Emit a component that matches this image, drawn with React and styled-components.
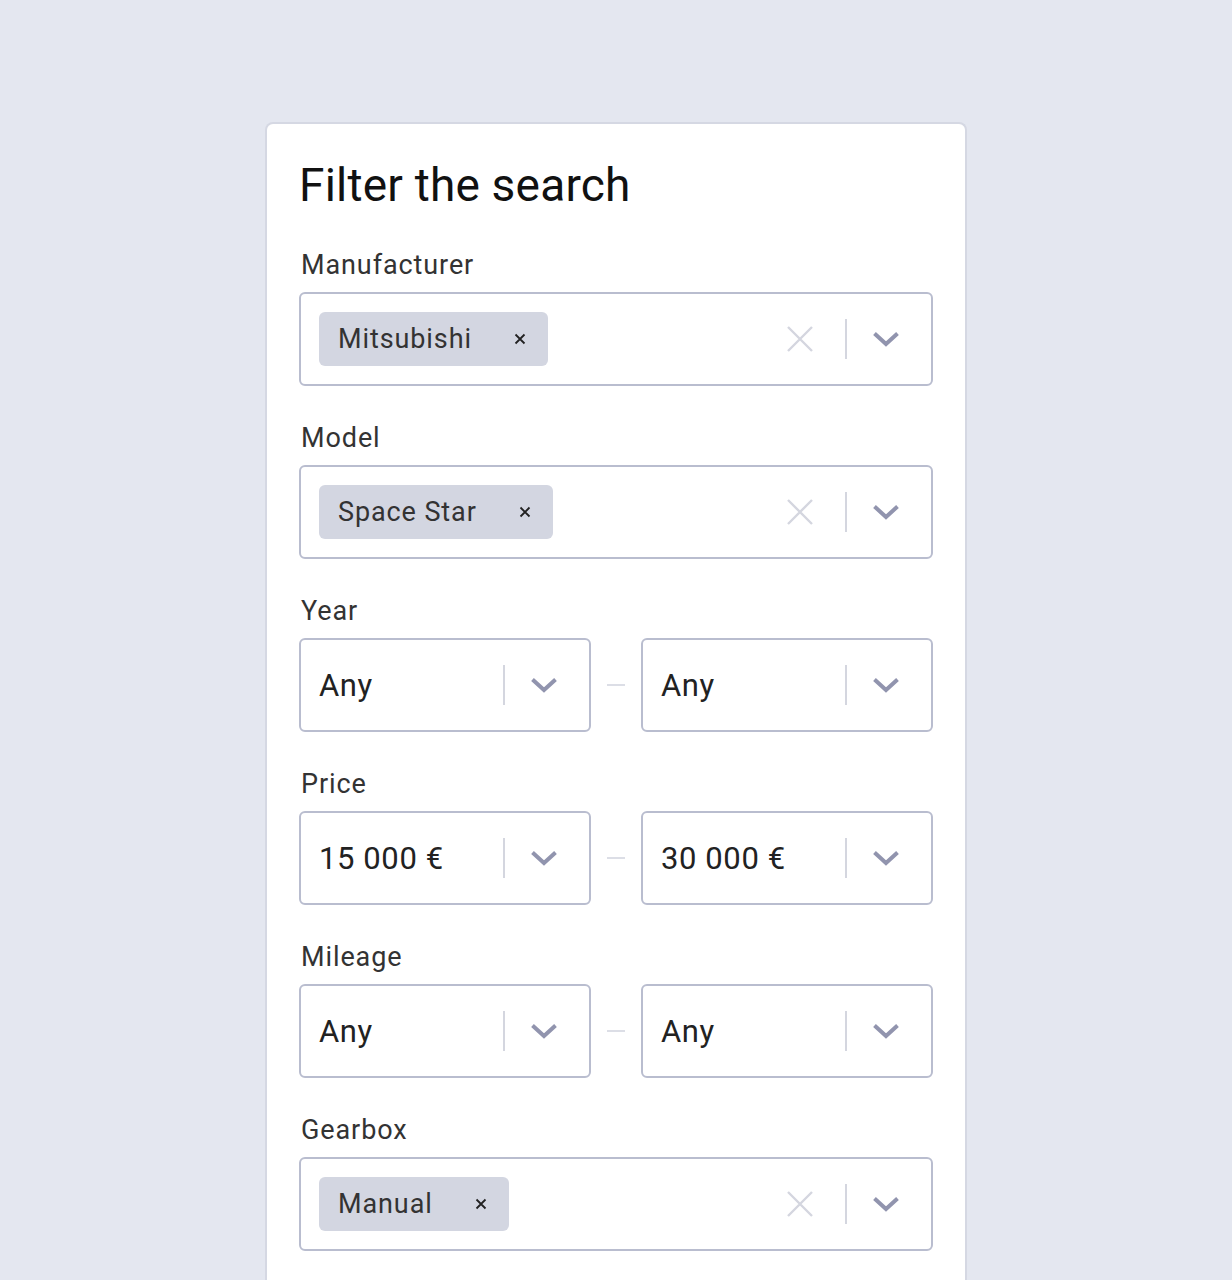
import React from 'react';
import styled, { createGlobalStyle } from 'styled-components';

const GlobalStyle = createGlobalStyle`
	html, body {
		margin: 0;
		padding: 0;
		background: #e4e7f0;
		font-family: Roboto, 'Noto Sans', sans-serif;
	}
`;

const Page = styled.div`
	display: flex;
	justify-content: center;
	padding-top: 122px;
	min-height: 1280px;
	box-sizing: border-box;
`;

const Card = styled.div`
	width: 702px;
	box-sizing: border-box;
	background: #fff;
	border: 2px solid #d5d8e3;
	border-bottom: none;
	border-radius: 8px 8px 0 0;
	padding: 30px 32px 40px;
`;

const Title = styled.h1`
	margin: 0 0 34px;
	font-size: 46px;
	font-weight: 400;
	line-height: 62px;
	color: #111;
	letter-spacing: 0.2px;
`;

const Section = styled.div`
	margin-bottom: 37px;
`;

const Label = styled.div`
	font-size: 27px;
	line-height: 30px;
	color: #333;
	letter-spacing: 0.9px;
	margin-bottom: 12px;
	padding-left: 2px;
`;

const Row = styled.div`
	display: flex;
	align-items: center;
`;

const Dash = styled.div`
	width: 50px;
	display: flex;
	justify-content: center;
	&::before {
		content: '';
		width: 18px;
		height: 2px;
		background: #dcdee6;
	}
`;

const Select = styled.div`
	flex: ${(p) => (p.half ? '0 0 292px' : '1')};
	height: 94px;
	box-sizing: border-box;
	border: 2px solid #b9bdcf;
	border-radius: 6px;
	display: flex;
	align-items: center;
	padding: 0 0 0 18px;
	background: #fff;
`;

const ValueArea = styled.div`
	flex: 1;
	display: flex;
	align-items: center;
`;

const Tag = styled.div`
	display: flex;
	align-items: center;
	height: 54px;
	background: #d3d6e1;
	border-radius: 6px;
	padding: 0 22px 0 19px;
	font-size: 27px;
	color: #333;
	letter-spacing: 0.9px;
`;

const TagRemove = styled.span`
	display: flex;
	margin-left: ${(p) => p.gap}px;
`;

const Value = styled.div`
	font-size: 31px;
	color: #222;
	letter-spacing: 0.6px;
`;

const Indicators = styled.div`
	display: flex;
	align-items: center;
	height: 100%;
`;

const ClearButton = styled.div`
	display: flex;
	margin-right: 31px;
`;

const Separator = styled.div`
	width: 2px;
	height: 40px;
	background: #d4d6df;
`;

const Chevron = styled.div`
	display: flex;
	padding: 0 31px 0 25px;
`;

const SmallX = () => (
	<svg width="12" height="12" viewBox="0 0 12 12">
		<path d="M1.5 1.5 L10.5 10.5 M10.5 1.5 L1.5 10.5" stroke="#222" strokeWidth="1.8" />
	</svg>
);

const BigX = () => (
	<svg width="28" height="28" viewBox="0 0 28 28">
		<path d="M2 2 L26 26 M26 2 L2 26" stroke="#d4d6df" strokeWidth="2.4" />
	</svg>
);

const Down = () => (
	<svg width="28" height="16" viewBox="0 0 28 16">
		<path d="M2.5 2.5 L14 13 L25.5 2.5" fill="none" stroke="#9194ae" strokeWidth="4" />
	</svg>
);

function MultiSelect({ tag, gap }) {
	return (
		<Select>
			<ValueArea>
				<Tag>
					{tag}
					<TagRemove gap={gap}>
						<SmallX />
					</TagRemove>
				</Tag>
			</ValueArea>
			<Indicators>
				<ClearButton>
					<BigX />
				</ClearButton>
				<Separator />
				<Chevron>
					<Down />
				</Chevron>
			</Indicators>
		</Select>
	);
}

function SingleSelect({ value }) {
	return (
		<Select half>
			<ValueArea>
				<Value>{value}</Value>
			</ValueArea>
			<Indicators>
				<Separator />
				<Chevron>
					<Down />
				</Chevron>
			</Indicators>
		</Select>
	);
}

function Range({ from, to }) {
	return (
		<Row>
			<SingleSelect value={from} />
			<Dash />
			<SingleSelect value={to} />
		</Row>
	);
}

export default function App() {
	return (
		<>
			<GlobalStyle />
			<Page>
				<Card>
					<Title>Filter the search</Title>

					<Section>
						<Label>Manufacturer</Label>
						<MultiSelect tag="Mitsubishi" gap={42} />
					</Section>

					<Section>
						<Label>Model</Label>
						<MultiSelect tag="Space Star" gap={42} />
					</Section>

					<Section>
						<Label>Year</Label>
						<Range from="Any" to="Any" />
					</Section>

					<Section>
						<Label>Price</Label>
						<Range from="15 000 €" to="30 000 €" />
					</Section>

					<Section>
						<Label>Mileage</Label>
						<Range from="Any" to="Any" />
					</Section>

					<Section>
						<Label>Gearbox</Label>
						<MultiSelect tag="Manual" gap={42} />
					</Section>
				</Card>
			</Page>
		</>
	);
}
